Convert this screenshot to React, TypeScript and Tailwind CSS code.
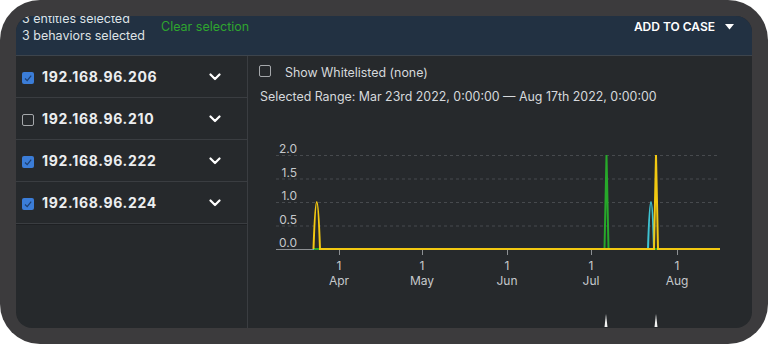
import type { ReactNode } from "react";

const hosts = [
  { ip: "192.168.96.206", checked: true },
  { ip: "192.168.96.210", checked: false },
  { ip: "192.168.96.222", checked: true },
  { ip: "192.168.96.224", checked: true },
];

// chart coordinates are relative to the right panel's svg (x - 248, y - 108)
const ox = 248;
const oy = 108;
const yOf = (v: number) => 250 - v * 47 - oy;
const gridValues = [2.0, 1.5, 1.0, 0.5];
const ticks = [
  { x: 339, label: "Apr" },
  { x: 422, label: "May" },
  { x: 507, label: "Jun" },
  { x: 591, label: "Jul" },
  { x: 677, label: "Aug" },
];

const Checkbox = ({ checked }: { checked: boolean }) =>
  checked ? (
    <span className="flex h-3 w-3 shrink-0 items-center justify-center rounded-[2px] bg-[#3b7dd8]">
      <svg width="10" height="10" viewBox="0 0 10 10">
        <polyline points="2,5.5 4.2,7.6 8.2,2.6" fill="none" stroke="#1d3f70" strokeWidth="1.2" />
      </svg>
    </span>
  ) : (
    <span className="block h-3 w-3 shrink-0 rounded-[2px] border border-[#a5a8ab]" />
  );

const Chevron = () => (
  <svg width="12" height="8" viewBox="0 0 12 8">
    <polyline points="1.5,1.5 6,6 10.5,1.5" fill="none" stroke="#ffffff" strokeWidth="2.2" strokeLinecap="round" strokeLinejoin="round" />
  </svg>
);

const Row = ({ children }: { children: ReactNode }) => (
  <div className="flex h-[42px] items-center border-b border-[#3a3d41] pl-[6px] pr-[26px]">{children}</div>
);

const Chart = () => {
  const base = yOf(0);
  // quadratic control point that makes the curve reach the peak value
  const ctrl = (v: number) => 2 * yOf(v) - base;
  return (
    <svg width="504" height="220" className="block" style={{ fontFamily: "Inter, sans-serif" }}>
      {gridValues.map((v) => (
        <line key={v} x1={276 - ox} x2={719 - ox} y1={yOf(v) + 0.5} y2={yOf(v) + 0.5} stroke="#474a4e" strokeDasharray="3 3" strokeWidth="1" />
      ))}
      {[...gridValues, 0].map((v) => (
        <text key={"l" + v} x={297 - ox} y={yOf(v) - 2} textAnchor="end" fontSize="12" fill="#c5c8cb">
          {v.toFixed(1)}
        </text>
      ))}
      <line x1={276 - ox} x2={720 - ox} y1={base + 0.5} y2={base + 0.5} stroke="#8d9094" strokeWidth="1" />
      {ticks.map((t) => (
        <g key={t.label}>
          <line x1={t.x - ox + 0.5} x2={t.x - ox + 0.5} y1={base} y2={base + 6} stroke="#8d9094" strokeWidth="1" />
          <text x={t.x - ox} y={271 - oy} textAnchor="middle" fontSize="12" fill="#c5c8cb">1</text>
          <text x={t.x - ox} y={286 - oy} textAnchor="middle" fontSize="12" fill="#c5c8cb">{t.label}</text>
        </g>
      ))}
      {/* cyan series */}
      <path
        d={`M${313 - ox},${base} L${648 - ox},${base} Q${651 - ox},${ctrl(1)} ${654 - ox},${base} L${720 - ox},${base}`}
        fill="none"
        stroke="#3ec3d3"
        strokeWidth="2"
      />
      {/* green series */}
      <path
        d={`M${314 - ox},${base} L${604.5 - ox},${base} L${606.5 - ox},${yOf(2)} L${608.5 - ox},${base} L${720 - ox},${base}`}
        fill="none"
        stroke="#27a82a"
        strokeWidth="2"
      />
      {/* yellow series */}
      <path
        d={`M${313.5 - ox},${base} Q${316.8 - ox},${ctrl(1)} ${320 - ox},${base} L${654 - ox},${base} L${656 - ox},${yOf(2)} L${658 - ox},${base} L${720 - ox},${base}`}
        fill="none"
        stroke="#f2c811"
        strokeWidth="2"
      />
      {/* brush markers */}
      <polygon points={`${604.5 - ox},220 ${606 - ox},207 ${607.5 - ox},220`} fill="#f2f2f2" />
      <polygon points={`${654.5 - ox},220 ${656 - ox},207 ${657.5 - ox},220`} fill="#f2f2f2" />
    </svg>
  );
};

export default function App() {
  return (
    <div className="h-[346px] w-[768px] bg-white" style={{ fontFamily: "Inter, 'Noto Sans', sans-serif" }}>
      <div className="h-[344px] w-full rounded-[40px] bg-[#3c3b3d] p-4">
        <div className="flex h-full flex-col overflow-hidden rounded-[16px] bg-[#26292c]">
          <div className="flex h-[40px] shrink-0 items-start border-b border-[#3d444c] bg-[#223142] pl-[6px] pr-[18px]">
            <div className="-mt-[6px] text-[12.5px] leading-[17px] text-[#dfe2e5]">
              <div>3 entities selected</div>
              <div>3 behaviors selected</div>
            </div>
            <button className="ml-[16px] mt-[2px] text-[12.5px] leading-[17px] text-[#2fa52f]">Clear selection</button>
            <div className="ml-auto mt-[2px] flex items-center gap-[10px]">
              <span className="text-[12px] font-semibold leading-[17px] text-white">ADD TO CASE</span>
              <svg width="9" height="6" viewBox="0 0 9 6">
                <polygon points="0,0 9,0 4.5,5.5" fill="#ffffff" />
              </svg>
            </div>
          </div>
          <div className="flex min-h-0 flex-1">
            <div className="w-[232px] shrink-0 border-r border-[#3a3d41]">
              {hosts.map((h, i) => (
                <div key={h.ip} className={i === hosts.length - 1 ? "border-b border-[#1e2023]" : ""}>
                  <Row>
                    <span className="mt-[3px]">
                      <Checkbox checked={h.checked} />
                    </span>
                    <span className="ml-2 text-[14px] font-bold tracking-[0.05em] text-[#eceef0]">{h.ip}</span>
                    <span className="ml-auto">
                      <Chevron />
                    </span>
                  </Row>
                </div>
              ))}
            </div>
            <div className="flex min-w-0 flex-1 flex-col">
              <div className="flex h-[30px] items-center pl-[11px] pt-[2px]">
                <span className="-mt-[2px]">
                  <Checkbox checked={false} />
                </span>
                <span className="ml-[14px] text-[12.4px] leading-[17px] text-[#d6d9dc]">Show Whitelisted (none)</span>
              </div>
              <div className="mt-[1px] pl-[12px] text-[12.4px] leading-[20px] text-[#d6d9dc]">
                Selected Range: Mar 23rd 2022, 0:00:00 — Aug 17th 2022, 0:00:00
              </div>
              <Chart />
            </div>
          </div>
        </div>
      </div>
    </div>
  );
}
